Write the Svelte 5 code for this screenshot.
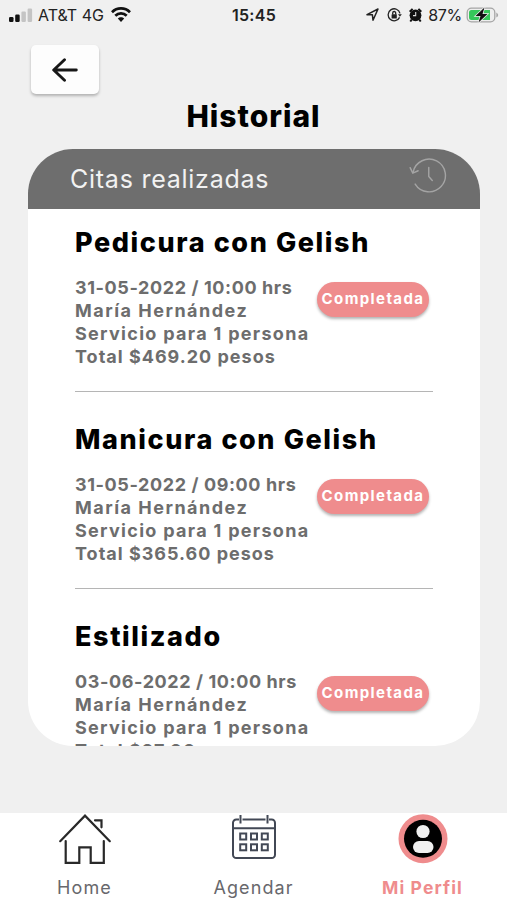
<script>
  const appointments = [
    {
      service: 'Pedicura con Gelish',
      date: '31-05-2022 / 10:00 hrs',
      client: 'María Hernández',
      detail: 'Servicio para 1 persona',
      total: 'Total $469.20 pesos'
    },
    {
      service: 'Manicura con Gelish',
      date: '31-05-2022 / 09:00 hrs',
      client: 'María Hernández',
      detail: 'Servicio para 1 persona',
      total: 'Total $365.60 pesos'
    },
    {
      service: 'Estilizado',
      date: '03-06-2022 / 10:00 hrs',
      client: 'María Hernández',
      detail: 'Servicio para 1 persona',
      total: 'Total $27.00'
    }
  ];
</script>

<div class="screen">
  <div class="status-bar">
    <div class="status-left">
      <svg width="24" height="14" viewBox="0 0 24 14">
        <rect x="0" y="9" width="4.5" height="5" rx="1.2" fill="#111" />
        <rect x="6.2" y="6.5" width="4.5" height="7.5" rx="1.2" fill="#111" />
        <rect x="12.4" y="3.5" width="4.5" height="10.5" rx="1.2" fill="#c4c4c4" />
        <rect x="18.6" y="0.5" width="4.5" height="13.5" rx="1.2" fill="#c4c4c4" />
      </svg>
      <span class="carrier">AT&amp;T 4G</span>
      <svg width="20" height="15" viewBox="0 0 20 15" fill="none" stroke="#111" stroke-width="2.7">
        <path d="M1 5.2C6 .2 14 .2 19 5.2" />
        <path d="M4.3 8.8c3.2-3.3 8.2-3.3 11.4 0" />
        <path d="M10 15l-3.2-3.5c1.7-1.8 4.7-1.8 6.4 0z" fill="#111" stroke="none" />
      </svg>
    </div>
    <span class="clock">15:45</span>
    <div class="status-right">
      <svg width="13" height="13" viewBox="0 0 13 13" fill="none" stroke="#222" stroke-width="1.5" stroke-linejoin="round">
        <path d="M1 6.7L12 1 7 12.2 6.4 6.8z" />
      </svg>
      <svg class="lock" width="15" height="14" viewBox="0 0 15 14" fill="none" stroke="#222" stroke-width="1.3">
        <path d="M13 5.3A6 6 0 1 0 12.6 9.4" />
        <path d="M11 6.2h3.8l-1.9 2.5z" fill="#222" stroke="none" />
        <rect x="4.6" y="6.3" width="5.2" height="4.1" rx=".5" fill="#222" stroke="none" />
        <path d="M5.7 6.5V5a1.5 1.5 0 0 1 3 0v1.5" />
      </svg>
      <svg class="alarm" width="13" height="14" viewBox="0 0 13 14">
        <circle cx="6.5" cy="7.3" r="5.9" fill="#111" />
        <path d="M.7 3.8L3.6.9M12.3 3.8L9.4.9M2.7 11.5l-1.4 2M10.3 11.5l1.4 2" stroke="#111" stroke-width="2" />
        <path d="M6.7 4v3.6H4" stroke="#ddd" stroke-width="1.1" fill="none" />
      </svg>
      <span class="percent">87%</span>
      <svg width="33" height="18" viewBox="0 0 33 18">
        <rect x="1.2" y="2.2" width="27.6" height="13.6" rx="4.3" fill="#eee" stroke="#a5a5a5" stroke-width="1.3" />
        <path d="M5.5 4H24v10H5.5A2.5 2.5 0 0 1 3 11.5V6.5A2.5 2.5 0 0 1 5.5 4z" fill="#35c75a" />
        <path d="M30.3 6.5q1.9 1 1.9 2.5t-1.9 2.5z" fill="#a5a5a5" />
        <path d="M18.5 1.5L9.5 10h5l-2 6.5L21.5 8h-5z" fill="#111" stroke="#eee" stroke-width="1.5" paint-order="stroke" />
      </svg>
    </div>
  </div>

  <button type="button" class="back" aria-label="Volver">
    <svg width="26" height="24" viewBox="0 0 26 24" fill="none" stroke="#171717" stroke-width="2.9" stroke-linecap="round" stroke-linejoin="round">
      <path d="M12.5 1.7L1.7 12l10.8 10.3M2.5 12H24.3" />
    </svg>
  </button>

  <h1>Historial</h1>

  <main class="card">
    <header>
      <h2>Citas realizadas</h2>
      <svg width="38" height="38" viewBox="0 0 40 40" fill="none" stroke="#a4a4a4" stroke-width="1.5" stroke-linecap="round" stroke-linejoin="round">
        <path d="M4.3 16A17.2 17.2 0 1 1 6.500 28.500" />
        <path d="M1.2 11.2l2.8 5.8 5.6-2.5M20.8 11v9.5l3.7 4.2" />
      </svg>
    </header>

    <div class="list">
      {#each appointments as item}
        <article>
          <h3>{item.service}</h3>
          <div class="row">
            <div class="info">
              <p class="date">{item.date}</p>
              <p class="client">{item.client}</p>
              <p class="detail">{item.detail}</p>
              <p class="total">{item.total}</p>
            </div>
            <span class="badge">Completada</span>
          </div>
        </article>
      {/each}
    </div>
  </main>

  <nav>
    <a class="home" href="#home">
      <svg width="54" height="54" viewBox="0 0 54 54" fill="none" stroke="#292929" stroke-width="2.2" stroke-linecap="round" stroke-linejoin="miter">
        <path d="M2.2 28.2L27 2.7l24.8 25.5M37 7.3h6.5v7M7.7 28v21.8h13.6V34.3h11.4v15.5h13.1V28" />
      </svg>
      <span>Home</span>
    </a>
    <a class="agenda" href="#agendar">
      <svg width="46" height="54" viewBox="0 0 46 54" fill="none" stroke="#424855" stroke-width="2">
        <path d="M8 6.5H5.3A3.3 3.3 0 0 0 2 9.8v32a3.3 3.3 0 0 0 3.3 3.3h35.4a3.3 3.3 0 0 0 3.3-3.3v-32a3.3 3.3 0 0 0-3.3-3.3H38M11.5 6.5h23M2 15.2h42M9.5 2v8.5M36.5 2v8.5" />
        {#each [20.5, 31.3] as y}
          {#each [9.2, 20, 30.8] as x}
            <rect {x} {y} width="6" height="6" />
          {/each}
        {/each}
      </svg>
      <span>Agendar</span>
    </a>
    <a class="profile" href="#perfil">
      <svg width="50" height="54" viewBox="0 0 50 54">
        <circle cx="25" cy="25.7" r="24.5" fill="#ef8c8d" />
        <circle cx="25" cy="25.7" r="19" fill="#000" />
        <circle cx="25" cy="18.5" r="6.6" fill="#f0f0f0" />
        <rect x="15" y="28" width="20.5" height="12" rx="6" fill="#f0f0f0" />
      </svg>
      <span>Mi Perfil</span>
    </a>
  </nav>
</div>

<style>
  :global(body) {
    margin: 0;
    background: #f0f0f0;
  }

  .screen {
    display: flex;
    flex-direction: column;
    box-sizing: border-box;
    width: 507px;
    height: 900px;
    overflow: hidden;
    background: #f0f0f0;
    font-family: Inter, sans-serif;
  }

  h1, h2, h3, p {
    margin: 0;
    white-space: nowrap;
  }

  svg {
    display: block;
    flex: none;
  }

  .status-bar {
    display: grid;
    grid-template-columns: 1fr auto 1fr;
    align-items: center;
    height: 29px;
    padding: 0 8px 0 9px;
    color: #222;
    font-size: 16px;
    flex: none;
  }

  .status-left, .status-right {
    display: flex;
    align-items: center;
  }

  .status-right {
    justify-content: flex-end;
  }

  .carrier {
    margin: 0 7px 0 5px;
  }

  .clock {
    font-weight: 600;
    letter-spacing: 0.3px;
  }

  .lock {
    margin-left: 8px;
  }

  .alarm {
    margin: 0 6px 0 7px;
  }

  .percent {
    margin-right: 4px;
    letter-spacing: -0.3px;
  }

  .back {
    display: flex;
    align-items: center;
    justify-content: center;
    flex: none;
    width: 68px;
    height: 49px;
    margin: 16px 0 0 31px;
    padding: 0;
    border: 0;
    border-radius: 5px;
    background: #fdfdfd;
    box-shadow: 0 2px 3px rgba(0, 0, 0, 0.26);
  }

  h1 {
    height: 40px;
    margin: 2px 0 13px;
    line-height: 40px;
    font-size: 30px;
    font-weight: 800;
    letter-spacing: 1px;
    text-align: center;
    color: #000;
  }

  .card {
    flex: none;
    width: 452px;
    height: 597px;
    margin-left: 28px;
    border-radius: 45px;
    background: #fff;
    overflow: hidden;
  }

  .card header {
    display: flex;
    align-items: center;
    justify-content: space-between;
    box-sizing: border-box;
    height: 60px;
    padding: 0 33px 7px 42px;
    background: #6e6e6e;
  }

  h2 {
    padding-top: 6px;
    font-size: 25px;
    font-weight: 400;
    letter-spacing: 0.75px;
    color: #f2f2f2;
  }

  .list {
    padding: 0 47px;
  }

  article {
    box-sizing: border-box;
    height: 197px;
    padding-top: 30px;
    border-top: 1px solid #b5b5b5;
  }

  article:first-child {
    height: 182px;
    padding-top: 16px;
    border-top: 0;
  }

  h3 {
    height: 34px;
    margin-bottom: 17px;
    line-height: 35px;
    font-size: 27px;
    font-weight: 800;
    letter-spacing: 1.6px;
    color: #000;
  }

  .row {
    display: flex;
    justify-content: space-between;
    padding-right: 4px;
  }

  .info p {
    height: 23px;
    line-height: 23px;
    font-size: 18px;
    font-weight: 700;
    color: #6d6d6d;
  }

  .info .date {
    letter-spacing: 0.6px;
  }

  .info .client {
    letter-spacing: 1.5px;
  }

  .info .detail {
    letter-spacing: 1.3px;
  }

  .info .total {
    letter-spacing: 1px;
  }

  .badge {
    box-sizing: border-box;
    flex: none;
    width: 112px;
    height: 35px;
    margin-top: 6px;
    line-height: 33px;
    border-radius: 18px;
    background: #ef8c8d;
    box-shadow: 0 2px 3px rgba(0, 0, 0, 0.3);
    color: #fff;
    font-size: 15px;
    font-weight: 700;
    letter-spacing: 1.4px;
    text-align: center;
  }

  nav {
    display: grid;
    grid-template-columns: repeat(3, 1fr);
    flex: none;
    height: 87px;
    margin-top: auto;
    background: #fff;
  }

  nav a {
    display: flex;
    flex-direction: column;
    align-items: center;
    color: #68686c;
    font-size: 18px;
    letter-spacing: 1.1px;
    text-decoration: none;
  }

  nav span {
    margin-top: 9px;
    line-height: 24px;
    white-space: nowrap;
  }

  .profile span {
    color: #ef8c8d;
    font-size: 17.5px;
    font-weight: 700;
  }
</style>
